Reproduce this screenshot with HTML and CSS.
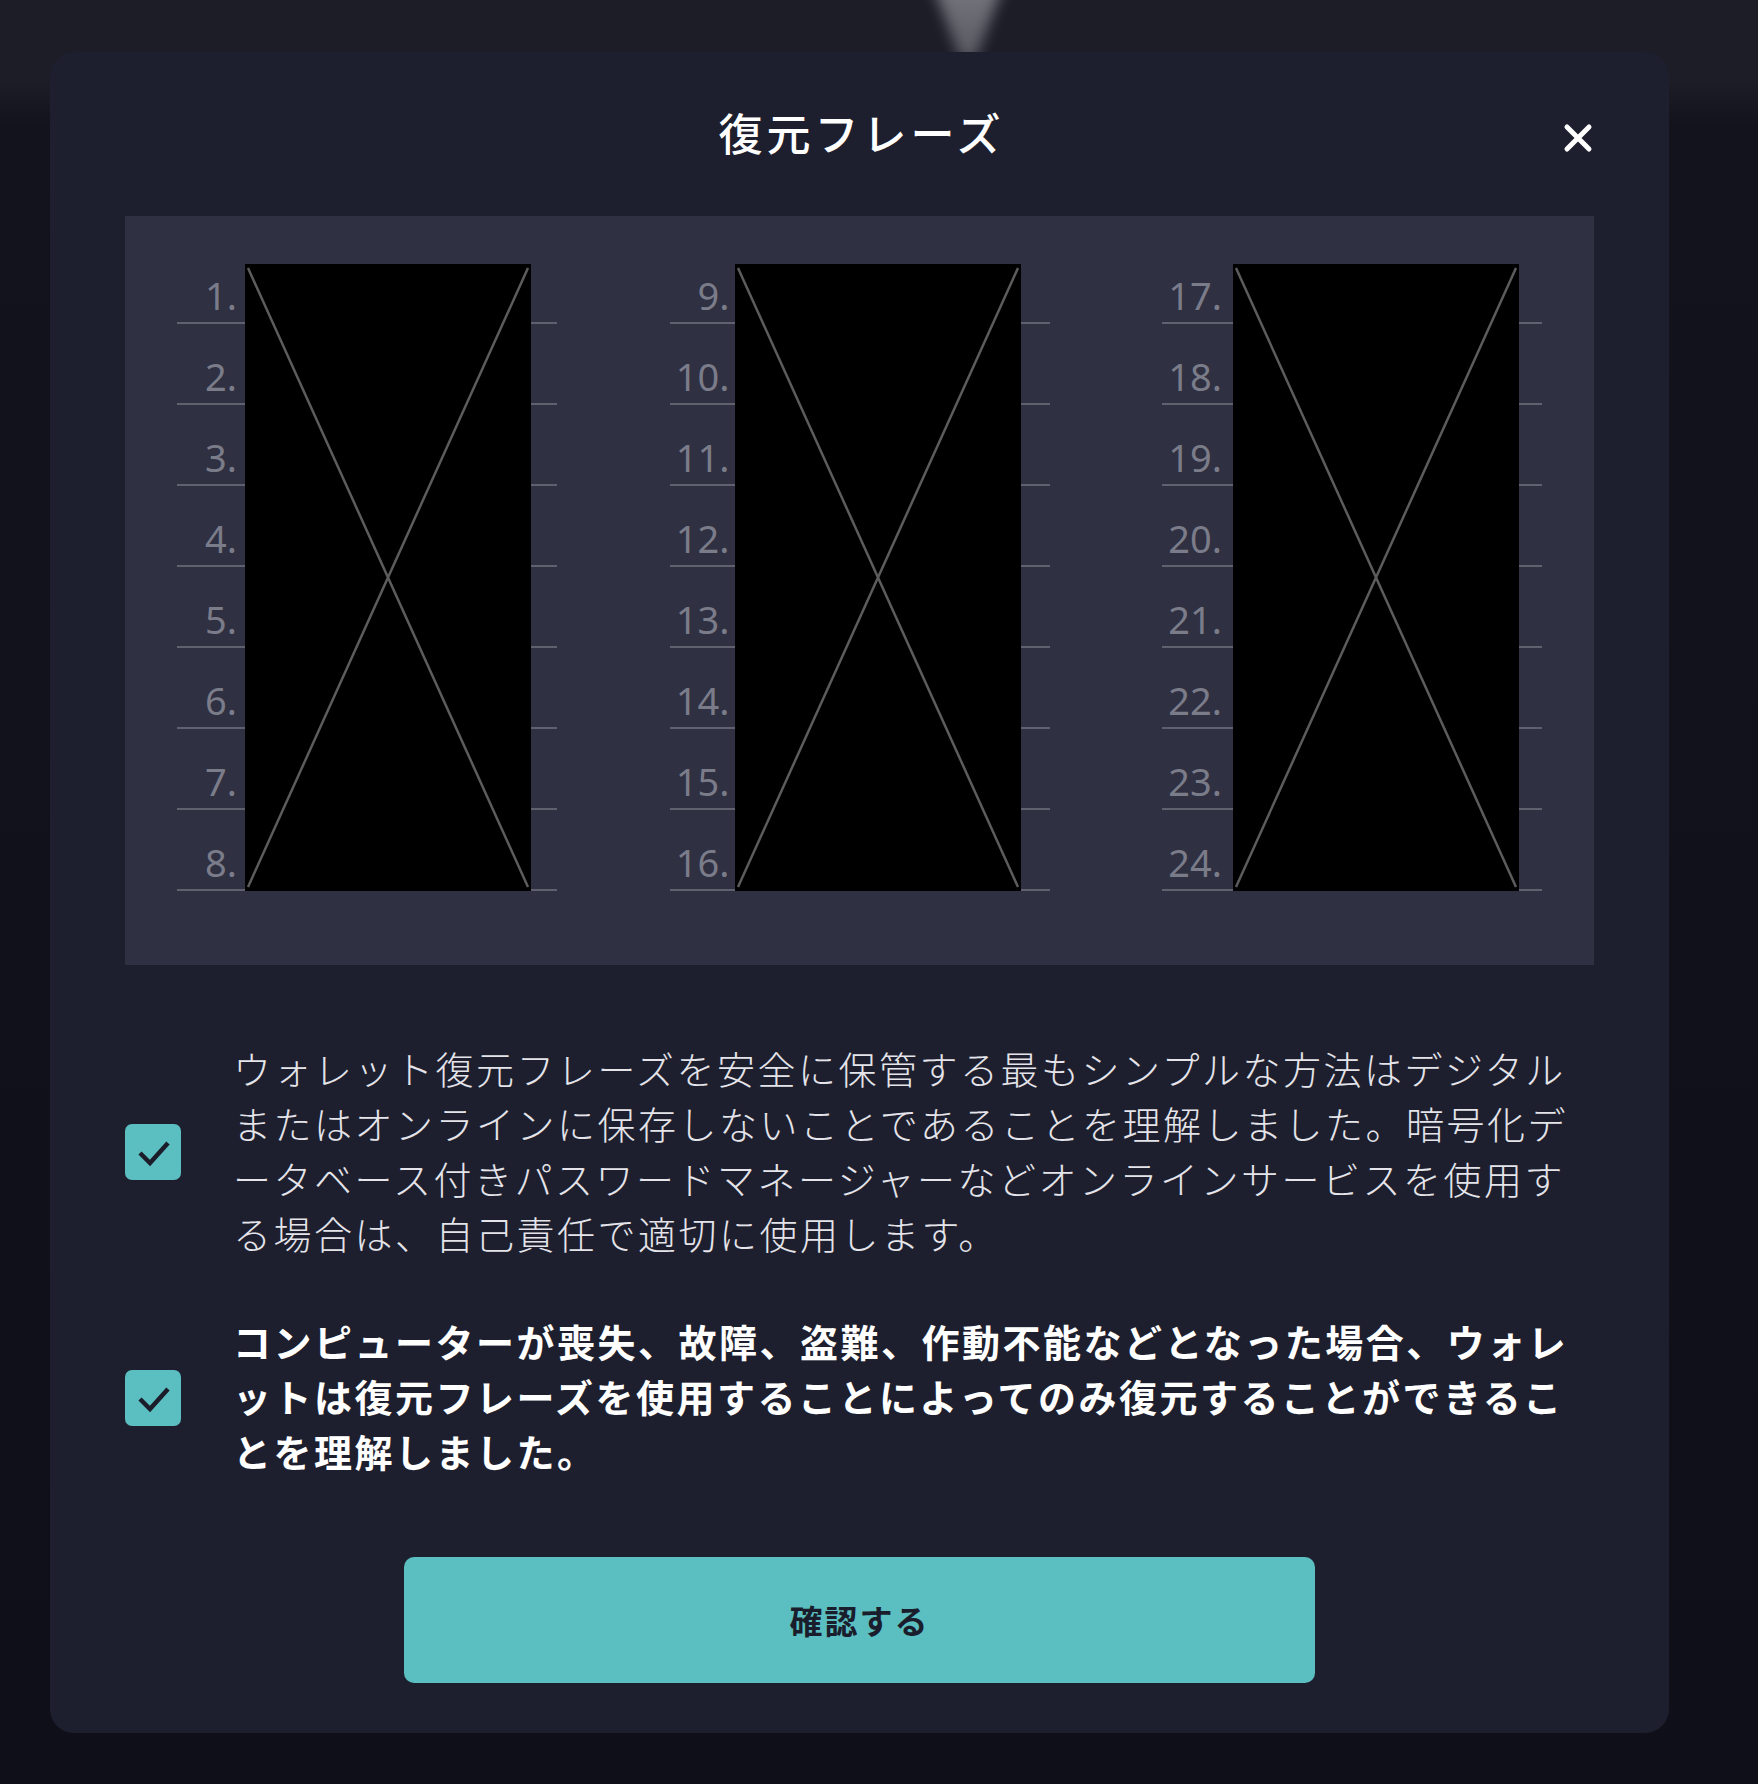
FILE: index.html
```html
<!DOCTYPE html>
<html lang="ja">
	<head>
		<meta charset="utf-8">
		<meta name="viewport" content="width=device-width, initial-scale=1.0">
		<title>復元フレーズ</title>
		<link rel="stylesheet" href="styles.css">
	</head>
	<body>
		<div class="backdrop-glow"><div class="backdrop-wedge"></div></div>
		<div class="modal">
			<div class="modal-head">
				<h1>復元フレーズ</h1>
				<button class="close" aria-label="閉じる">
					<svg viewBox="0 0 32 32" width="32" height="32"><path d="M5 5 L27 27 M27 5 L5 27" stroke="#fff" stroke-width="5" stroke-linecap="round" fill="none"/></svg>
				</button>
			</div>

			<div class="phrase">
				<div class="phrase-col">
					<div class="word-row"><span class="word-num">1.</span></div>
					<div class="word-row"><span class="word-num">2.</span></div>
					<div class="word-row"><span class="word-num">3.</span></div>
					<div class="word-row"><span class="word-num">4.</span></div>
					<div class="word-row"><span class="word-num">5.</span></div>
					<div class="word-row"><span class="word-num">6.</span></div>
					<div class="word-row"><span class="word-num">7.</span></div>
					<div class="word-row"><span class="word-num">8.</span></div>
					<div class="word-mask">
						<svg viewBox="0 0 286 627" preserveAspectRatio="none"><rect width="286" height="627" fill="#000"/><path d="M3 4 L283 623 M283 4 L3 623" stroke="#5c5c5c" stroke-width="2.5" vector-effect="non-scaling-stroke" fill="none"/></svg>
					</div>
				</div>
				<div class="phrase-col">
					<div class="word-row"><span class="word-num">9.</span></div>
					<div class="word-row"><span class="word-num">10.</span></div>
					<div class="word-row"><span class="word-num">11.</span></div>
					<div class="word-row"><span class="word-num">12.</span></div>
					<div class="word-row"><span class="word-num">13.</span></div>
					<div class="word-row"><span class="word-num">14.</span></div>
					<div class="word-row"><span class="word-num">15.</span></div>
					<div class="word-row"><span class="word-num">16.</span></div>
					<div class="word-mask">
						<svg viewBox="0 0 286 627" preserveAspectRatio="none"><rect width="286" height="627" fill="#000"/><path d="M3 4 L283 623 M283 4 L3 623" stroke="#5c5c5c" stroke-width="2.5" vector-effect="non-scaling-stroke" fill="none"/></svg>
					</div>
				</div>
				<div class="phrase-col">
					<div class="word-row"><span class="word-num">17.</span></div>
					<div class="word-row"><span class="word-num">18.</span></div>
					<div class="word-row"><span class="word-num">19.</span></div>
					<div class="word-row"><span class="word-num">20.</span></div>
					<div class="word-row"><span class="word-num">21.</span></div>
					<div class="word-row"><span class="word-num">22.</span></div>
					<div class="word-row"><span class="word-num">23.</span></div>
					<div class="word-row"><span class="word-num">24.</span></div>
					<div class="word-mask">
						<svg viewBox="0 0 286 627" preserveAspectRatio="none"><rect width="286" height="627" fill="#000"/><path d="M3 4 L283 623 M283 4 L3 623" stroke="#5c5c5c" stroke-width="2.5" vector-effect="non-scaling-stroke" fill="none"/></svg>
					</div>
				</div>
			</div>

			<label class="agree first">
				<span class="check"><svg viewBox="0 0 56 56" width="56" height="56"><path d="M15 29 L25 39 L43 19" stroke="#1b1d2b" stroke-width="4.5" fill="none"/></svg></span>
				<span class="agree-text light">ウォレット復元フレーズを安全に保管する最もシンプルな方法はデジタルまたはオンラインに保存しないことであることを理解しました。暗号化データベース付きパスワードマネージャーなどオンラインサービスを使用する場合は、自己責任で適切に使用します。</span>
			</label>
			<label class="agree second">
				<span class="check"><svg viewBox="0 0 56 56" width="56" height="56"><path d="M15 29 L25 39 L43 19" stroke="#1b1d2b" stroke-width="4.5" fill="none"/></svg></span>
				<span class="agree-text bold">コンピューターが喪失、故障、盗難、作動不能などとなった場合、ウォレットは復元フレーズを使用することによってのみ復元することができることを理解しました。</span>
			</label>

			<button class="confirm">確認する</button>
		</div>
	</body>
</html>
```

FILE: styles.css
```css
* {
	box-sizing: border-box;
}
html, body {
	margin: 0;
	height: 100%;
}
body {
	position: relative;
	overflow: hidden;
	font-family: 'Noto Sans', 'Noto Sans CJK JP', sans-serif;
	background: linear-gradient(to bottom, #1c1d27 0, #1c1d27 80px, #12131c 125px, #0e0f18 100%);
	color: #ffffff;
}
.backdrop-glow {
	position: absolute;
	top: -24px;
	left: 922px;
	width: 92px;
	height: 84px;
	filter: blur(7px);
	opacity: 0.75;
}
.backdrop-wedge {
	width: 100%;
	height: 100%;
	clip-path: polygon(8% 0, 92% 0, 58% 100%, 42% 100%);
	background: linear-gradient(to bottom, #9a9aa0, #6c6c74);
}
.modal {
	position: relative;
	width: 1619px;
	height: 1681px;
	margin: 52px 0 0 50px;
	padding: 0 75px 50px;
	background-color: #1e1f2e;
	border-radius: 24px;
}
.modal-head {
	position: relative;
	padding: 56px 0;
	text-align: center;
}
.modal-head h1 {
	margin: 0;
	padding-left: 4px;
	font-size: 44px;
	line-height: 52px;
	font-weight: 500;
	letter-spacing: 4px;
}
.close {
	position: absolute;
	top: 70px;
	right: 0;
	width: 32px;
	height: 32px;
	padding: 0;
	border: none;
	background: none;
}
.close svg {
	display: block;
}
.phrase {
	display: flex;
	justify-content: space-between;
	padding: 27px 52px 74px;
	background-color: #2f3041;
}
.phrase-col {
	position: relative;
	width: 380px;
}
.word-row {
	display: flex;
	align-items: flex-end;
	height: 81px;
	padding-bottom: 8px;
	border-bottom: 2px solid #60616f;
}
.word-num {
	width: 60px;
	text-align: right;
	font-size: 38px;
	line-height: 1;
	color: #7b7c8a;
}
.word-mask {
	position: absolute;
	top: 21px;
	bottom: 0;
	left: 68px;
	width: 286px;
}
.phrase-col:nth-child(2) .word-mask {
	left: 65px;
}
.phrase-col:nth-child(3) .word-mask {
	left: 71px;
}
.word-mask svg {
	display: block;
	width: 100%;
	height: 100%;
}
.agree {
	display: flex;
	align-items: center;
	gap: 52px;
	padding-right: 10px;
}
.agree.first {
	margin-top: 77px;
}
.agree.second {
	margin-top: 53px;
}
.check {
	flex: none;
	width: 56px;
	height: 56px;
	border-radius: 7px;
	background-color: #5bbfc1;
}
.check svg {
	display: block;
}
.agree-text {
	font-size: 38px;
	line-height: 55px;
	letter-spacing: 2.5px;
	line-break: loose;
}
.agree-text.light {
	font-weight: 300;
	color: #e4e4ea;
}
.agree-text.bold {
	font-weight: 700;
	color: #ffffff;
}
.confirm {
	display: block;
	width: 911px;
	height: 126px;
	margin: 77px auto 0;
	border: none;
	border-radius: 10px;
	background-color: #5bbfc1;
	color: #1a1d2b;
	font-family: inherit;
	font-size: 33px;
	font-weight: 700;
	letter-spacing: 2px;
}
```
